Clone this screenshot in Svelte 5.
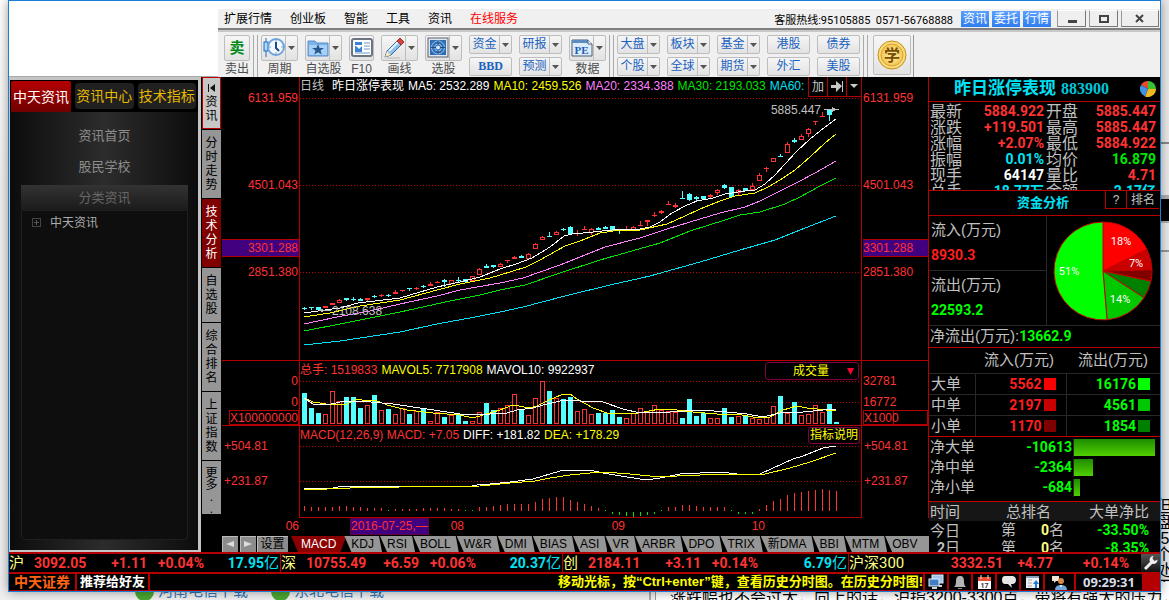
<script>
  const menus = ['扩展行情', '创业板', '智能', '工具', '资讯'];
  const quick = ['资讯', '委托', '行情'];
  const pairsA = [
    [['资金', true], ['BBD', false]],
    [['研报', true], ['预测', true]]
  ];
  const pairsB = [
    [['大盘', true], ['个股', true]],
    [['板块', true], ['全球', true]],
    [['基金', true], ['期货', true]],
    [['港股', false], ['外汇', false]],
    [['债券', false], ['美股', false]]
  ];
  const tools = [
    { id: 'period', label: '周期', drop: true },
    { id: 'folder', label: '自选股', drop: true },
    { id: 'f10', label: 'F10', drop: false },
    { id: 'pencil', label: '画线', drop: true },
    { id: 'radar', label: '选股', drop: true }
  ];
  const vtabs = ['分时走势', '技术分析', '自选股', '综合排名', '上证指数', '更多\n.\n.'];
  const indicators = ['MACD', 'KDJ', 'RSI', 'BOLL', 'W&R', 'DMI', 'BIAS', 'ASI', 'VR', 'ARBR', 'DPO', 'TRIX', '新DMA', 'BBI', 'MTM', 'OBV'];

  // kind, body top, body bottom, wick top, wick bottom
  const candles = `c308,309,307,310 c307,308,307,310 c307,310,307,310 r306,308,306,308 r303,305,303,305 r300,303,299,303 c298,300,298,301 c299,300,297,301
c299,301,298,301 r298,300,298,301 c296,297,295,298 r295,296,294,297 c295,296,294,297 r292,294,290,294 r290,291,290,292 c288,289,288,291 r288,289,287,290
c286,287,285,288 r284,286,282,286 r282,283,281,283 c280,282,279,287 r280,284,280,284 c280,281,277,282 c279,282,279,282 r276,281,276,282 r269,275,268,275
c266,268,264,268 c265,267,265,268 r264,267,263,267 r260,261,260,263 r257,259,256,259 c256,258,255,258 r254,259,253,259 r244,249,243,249 r237,240,236,240
c236,237,232,237 r232,235,231,235 c229,230,228,231 c227,234,226,234 r233,234,230,236 r229,230,226,230 r229,233,228,235 c228,230,227,230 c227,229,226,229
c226,230,226,231 c230,231,230,234 r229,230,226,230 r227,230,226,231 r225,226,221,226 r220,222,220,226 r215,216,212,217 r211,213,210,214 r204,205,201,205
r205,207,203,208 c198,199,191,199 c194,200,193,201 c197,199,196,201 c196,199,196,200 r195,197,194,198 r190,193,189,195 c185,188,184,189 c187,197,187,197
r190,193,189,195 c188,191,188,191 r186,190,183,190 r175,181,173,181 r168,169,167,172 r158,162,158,162 c156,157,154,157 r144,153,142,153 c140,142,138,143
r136,140,134,140 r129,134,128,137 r121,122,121,125 r116,117,112,117 c110,115,109,121 c109,110,109,110`
    .split(/\s+/)
    .map((s, i) => {
      const [t, b, h, l] = s.slice(1).split(',').map(Number);
      return { up: s[0] === 'r', t, b, h, l, x: 304 + i * 7 };
    });

  const averages = [
    ['#fff', '304,313 325,310 340,308 358,303 400,298 437,287 460,282 480,277 500,269 516,264 532,258 550,247 564,236 572,234 583,233 612,230 640,229 650,227 660,222 672,213 685,206 697,201 713,198 725,194 745,191 755,190 765,184 775,175 785,164 797,151 810,139 820,131 836,119'],
    ['#ff0', '304,317 330,313 360,306 400,300 437,290 460,284 490,278 500,275 526,267 540,260 565,246 580,241 600,233 620,230 640,230 667,224 685,216 700,209 720,201 735,196 755,193 768,187 780,180 795,170 810,157 825,143 836,134'],
    ['#ff80ff', '304,324 337,317 370,311 400,304 437,296 460,290 500,283 523,278 560,265 605,247 640,238 667,229 700,219 720,213 745,207 760,201 780,191 800,181 815,173 836,161'],
    ['#00e600', '304,331 340,324 360,320 400,312 450,301 480,295 500,290 525,285 560,273 600,260 660,243 690,231 725,220 740,215 760,212 785,204 800,197 820,186 836,178'],
    ['#02e2f4', '304,345 340,341 400,332 437,324 470,318 500,312 523,307 565,296 610,285 650,276 700,262 740,250 775,240 800,230 836,216']
  ];

  const volumes = 'c31 c16 c11 r10 r33 r23 c27 c27 c16 r19 c29 r14 c15 r10 r16 c10 r13 c16 r3 r12 c7 r9 c10 c3 r3 r12 c21 c14 r16 r19 r30 c14 r9 r26 r43 c33 r26 c25 c27 r13 r15 r10 c11 c11 c14 c7 r6 r11 r16 r13 r19 r14 r13 r12 c6 c25 c8 c11 r6 r6 c16 c7 r8 c9 r6 r5 r7 r18 c28 r11 c22 r9 r10 r19 r12 c20 c2'
    .split(' ')
    .map((s, i) => ({ up: s[0] === 'r', h: Number(s.slice(1)), x: 302 + i * 7 }));

  const hist = [5, 4, 4, 4, 4, 5, 5, 4, 4, 3, 3, 3, 0, 2, 2, 2, 2, 3, 3, 3, 3, 2, 2, 0, 0, 4, 4, 5, 6, 7, 7, 7, 7, 9, 12, 13, 14, 14, 11, 9, 7, 5, 3, 0, -1, -2, -3, -4, -3, -2, -1, 0, 4, 4, 6, 6, 5, 4, 4, 4, 4, 0, -1, -1, -1, 2, 6, 10, 12, 16, 18, 19, 20, 21, 22, 21, 20];

  const quotes = [
    ['最新', '5884.922', 'up', '开盘', '5885.447', 'up'],
    ['涨跌', '+119.501', 'up', '最高', '5885.447', 'up'],
    ['涨幅', '+2.07%', 'up', '最低', '5884.922', 'up'],
    ['振幅', '0.01%', 'cy', '均价', '16.879', 'gr'],
    ['现手', '64147', 'wh', '量比', '4.71', 'up'],
    ['总手', '18.77万', 'cy', '金额', '2.17亿', 'cy']
  ];
  const orders = [
    ['大单', 5562, '#ff0000', 16176, '#00ff00'],
    ['中单', 2197, '#c80000', 4561, '#00c800'],
    ['小单', 1170, '#800000', 1854, '#008000']
  ];
  const nets = [['净大单', -10613, 100], ['净中单', -2364, 24], ['净小单', -684, 7]];

  const parts = [[5562, '#ff0000'], [2197, '#c80000'], [1170, '#800000'], [1854, '#008000'], [4561, '#00c800'], [16176, '#00ff00']];
  const total = parts.reduce((s, p) => s + p[0], 0);
  let acc = 0;
  const slices = parts.map(([v, fill]) => {
    const a = (acc / total) * Math.PI * 2;
    acc += v;
    const b = (acc / total) * Math.PI * 2;
    const at = (q) => `${(50 + 49 * Math.sin(q)).toFixed(2)} ${(50 - 49 * Math.cos(q)).toFixed(2)}`;
    return { fill, d: `M50 50 L${at(a)} A49 49 0 ${b - a > Math.PI ? 1 : 0} 1 ${at(b)} Z` };
  });

  const tickers = [
    ['沪', '3092.05', '+1.11', '+0.04%', '17.95', '亿'],
    ['深', '10755.49', '+6.59', '+0.06%', '20.37', '亿'],
    ['创', '2184.11', '+3.11', '+0.14%', '6.79', '亿'],
    ['沪深300', '3332.51', '+4.77', '+0.14%', '', '']
  ];
</script>

{#snippet toolIcon(id)}
  <svg width="22" height="22" viewBox="0 0 22 22" aria-hidden="true">
    {#if id === 'period'}
      <path d="M3 1v4M3 14v6" stroke="#2266bb" />
      <rect x="1" y="5" width="4" height="9" fill="#a8dcff" stroke="#2266bb" />
      <circle cx="13" cy="10" r="8" fill="#f4f9ff" stroke="#6fa3dc" stroke-width="2" />
      <path d="M13 3v2M13 15v2M6 10h2M18 10h2" stroke="#7da4cc" />
      <path d="M13 5v6l3 3" fill="none" stroke="#1d4c86" stroke-width="2" />
    {:else if id === 'folder'}
      <path d="M1 4h7l2 2h11v13H1z" fill="#7db2e8" stroke="#5b90cc" />
      <path d="M2 8h18v10H2z" fill="#a6d0f8" />
      <path d="M11 7l1.600 4H17l-3.500 2.600 1.300 4L11 15.200 7.200 17.600l1.300-4L5 11h4.400z" fill="#27588f" />
    {:else if id === 'f10'}
      <rect x="1" y="2" width="20" height="17" rx="2" fill="#fff" stroke="#6c7480" stroke-width="2" />
      <path d="M4 5h7v3H4zM4 9h7v6H4z" fill="#3b82d0" />
      <path d="M5 9l3 3 3-3" fill="#fff" />
      <path d="M13 6h6M13 9h6M13 12h6M4 16h15" stroke="#6f96c4" />
    {:else if id === 'pencil'}
      <path d="M2 20l2-6L15 3l4 4L8 18z" fill="#8cc1f2" stroke="#38648f" />
      <path d="M6 14L16 4" stroke="#e4f3ff" stroke-width="2" />
      <path d="M14 4l3-3 4 4-3 3z" fill="#d6453d" stroke="#9c2f2a" />
      <path d="M2 20l2-6 4 4z" fill="#f5e3c0" />
      <path d="M4 21h13" stroke="#b9b9b9" />
    {:else if id === 'radar'}
      <rect x="1" y="1" width="20" height="19" fill="#dfe6ee" stroke="#59626e" />
      <rect x="3" y="3" width="16" height="15" fill="#2f6cb0" />
      <g fill="none" stroke="#9cc4ee"><circle cx="11" cy="10.500" r="6.500" /><circle cx="11" cy="10.500" r="3.500" /><path d="M11 4v13M4 10.500h14" stroke="#1c4d86" /></g>
      <circle cx="11" cy="10.500" r="2" fill="#d4e9ff" />
    {:else}
      <path d="M1 3h16l4 4v12H1z" fill="#dcecfc" stroke="#4b5f75" />
      <path d="M1 3h16v3H1z" fill="#5d8cc0" />
      <path d="M17 3v4h4" fill="#fff" stroke="#4b5f75" />
      <text x="10.500" y="17" text-anchor="middle" font-family="Liberation Serif, serif" font-size="11" font-weight="700" fill="#1f5db0">PE</text>
    {/if}
  </svg>
{/snippet}

{#snippet caret()}
  <svg class="caret" width="7" height="4" viewBox="0 0 7 4" aria-hidden="true"><path d="M0 0h7L3.500 4z" fill="#555" /></svg>
{/snippet}

{#snippet tool(id, label, drop)}
  <div class="tool">
    <button class="split" aria-label={label}>
      <span class="pic">{@render toolIcon(id)}</span>
      {#if drop}<span class="drop">{@render caret()}</span>{/if}
    </button>
    <span class="cap">{label}</span>
  </div>
{/snippet}

{#snippet pair(col)}
  <div class="pair">
    {#each col as [name, drop]}
      <button class="small" class:latin={name === 'BBD'}>
        <span class="name">{name}</span>
        {#if drop}<span class="drop">{@render caret()}</span>{/if}
      </button>
    {/each}
  </div>
{/snippet}

<div class="desktop">
  <div class="behind right-page" aria-hidden="true">
    <i class="band b1"></i><i class="band b2"></i><i class="band b3"></i>
    <p>但<br />盘<br />.5<br />个<br />处<br />于</p>
  </div>
  <div class="behind bottom-page" aria-hidden="true">
    <div class="links">
      <span class="dot"></span><span class="lnk">河南电信下载</span>
      <span class="dot"></span><span class="lnk">东北电信下载</span>
    </div>
    <div class="article">涨跌幅也不会过大，向上的话，沪指3200-3300点，带将有强大的压力，向下的话</div>
  </div>

  <main class="window">
    <header class="top">
      <div class="blank"></div>
      <div class="bars">
        <div class="menubar">
          <nav>
            {#each menus as m}<button class="menu">{m}</button>{/each}
            <button class="menu hot">在线服务</button>
          </nav>
          <span class="phone">客服热线:95105885&nbsp; 0571-56768888</span>
          <div class="quick">{#each quick as q}<button>{q}</button>{/each}</div>
          <div class="winbtns">
            <button aria-label="最小化"><svg width="10" height="10"><path d="M1 6h9v3H1z" fill="#444" /></svg></button>
            <button aria-label="最大化"><svg width="10" height="10"><path d="M1 2h8v6H1z" fill="none" stroke="#444" stroke-width="2" /></svg></button>
            <button class="wide" aria-label="关闭"><svg width="10" height="10"><path d="M1 1l7 7M8 1L1 8" stroke="#444" stroke-width="2" /></svg></button>
          </div>
        </div>
        <div class="toolbar">
          <div class="tool">
            <button class="split sell"><span>卖</span></button>
            <span class="cap">卖出</span>
          </div>
          <i class="grip"></i>
          <div class="group">
            {#each tools as t}{@render tool(t.id, t.label, t.drop)}{/each}
            {#each pairsA as col}{@render pair(col)}{/each}
            {@render tool('pe', '数据', true)}
          </div>
          <i class="grip"></i>
          <div class="group">{#each pairsB as col}{@render pair(col)}{/each}</div>
          <i class="grip"></i>
          <button class="learn" aria-label="学">
            <svg width="30" height="30" viewBox="0 0 30 30">
              <defs><radialGradient id="coin"><stop offset="0" stop-color="#fff3b0" /><stop offset="1" stop-color="#f3c650" /></radialGradient></defs>
              <circle cx="15" cy="15" r="14" fill="#f9dc7c" stroke="#c58d1a" />
              <circle cx="15" cy="15" r="11" fill="url(#coin)" stroke="#d8a432" />
              <text x="15" y="21" text-anchor="middle" font-family="Noto Sans CJK SC, sans-serif" font-size="16" font-weight="700" fill="#7a4d05">学</text>
            </svg>
          </button>
          <i class="edge"></i>
        </div>
      </div>
    </header>

    <div class="body">
      <aside class="info">
        <div class="itabs">
          <button class="on">中天资讯</button><button>资讯中心</button><button>技术指标</button>
        </div>
        <div class="ibody">
          <a href="#home">资讯首页</a>
          <a href="#school">股民学校</a>
          <a href="#sort" class="sel">分类资讯</a>
          <div class="tree"><span class="plus"></span><span>中天资讯</span></div>
        </div>
      </aside>

      <nav class="vtabs">
        <button class="first">
          <svg width="9" height="9" viewBox="0 0 9 9" aria-hidden="true"><path d="M1 0h1v8H1zM8 0v8L3 4z" fill="#111" /></svg>
          <span>资讯</span>
        </button>
        {#each vtabs as v, i}<button class:on={i === 1} class:more={i === 5}><span>{v}</span></button>{/each}
      </nav>

      <section class="chart">
        <div class="axis left price">
          <span>6131.959</span><span>4501.043</span><span class="cursor">3301.288</span><span>2851.380</span>
        </div>
        <div class="plot">
          <svg viewBox="300 77 561 283" preserveAspectRatio="none" shape-rendering="crispEdges" aria-hidden="true">
            {#each [98, 185, 272] as y}<line x1="300" x2="861" y1={y + 0.5} y2={y + 0.5} stroke="#c00000" stroke-dasharray="1 2" />{/each}
            {#each candles as c}
              <rect x={c.x} y={c.h} width="1" height={c.l - c.h} fill={c.up ? '#ff3232' : '#54ffff'} />
              {#if c.up && c.b - c.t > 2}
                <rect x={c.x - 1.5} y={c.t + 0.5} width="4" height={c.b - c.t - 1} fill="#000" stroke="#ff3232" />
              {:else}
                <rect x={c.x - 2} y={c.t} width="5" height={c.b - c.t} fill={c.up ? '#ff3232' : '#54ffff'} />
              {/if}
            {/each}
            {#each averages as [color, pts]}<polyline points={pts} fill="none" stroke={color} />{/each}
            <path d="M319 310.500h12M824 109.500h14" stroke="#c0c0c0" />
            <path d="M319 310.500l4-2v4zM836 109.500l-4-3v6z" fill="#c0c0c0" />
          </svg>
          <div class="legend main">
            <span class="gy">日线</span><span class="wh wide">昨日涨停表现</span><span class="wh">MA5: 2532.289</span><span class="ye">MA10: 2459.526</span><span class="mg">MA20: 2334.388</span><span class="dg">MA30: 2193.033</span><span class="cy cut">MA60: 1969.217</span>
          </div>
          <div class="ctl">
            <button>加</button>
            <button aria-label="末端"><svg width="13" height="11"><path d="M0 4h5V0l6 5-6 6V7H0zM11 0h1v11h-1z" fill="#c8c8c8" /></svg></button>
            <button aria-label="展开"><svg width="8" height="5"><path d="M0 0h8L4 4z" fill="#c8c8c8" /></svg></button>
          </div>
          <span class="note low">2108.638</span>
          <span class="note high">5885.447</span>
        </div>
        <div class="axis right price">
          <span>6131.959</span><span>4501.043</span><span class="cursor">3301.288</span><span>2851.380</span>
        </div>

        <div class="axis left vol"><span>0</span><span>0</span><span class="unit">X100000000</span></div>
        <div class="plot">
          <svg viewBox="300 361 561 64" preserveAspectRatio="none" shape-rendering="crispEdges" aria-hidden="true">
            {#each [381, 402] as y}<line x1="300" x2="861" y1={y + 0.5} y2={y + 0.5} stroke="#c00000" stroke-dasharray="1 2" />{/each}
            {#each volumes as v}
              {#if v.up}
                <rect x={v.x + 0.5} y={424.5 - v.h} width="4" height={v.h - 1} fill="#000" stroke="#ff3232" />
              {:else}
                <rect x={v.x} y={424 - v.h} width="5" height={v.h} fill="#54ffff" />
              {/if}
            {/each}
            <polyline fill="none" stroke="#ff0" points="304,398 313,402 333,405 347,404 357,399 367,401 375,400 387,405 407,410 433,413 460,415 473,418 483,415 500,410 513,405 530,408 537,406 547,401 563,394 570,394 577,399 593,408 607,413 633,414 660,409 677,410 693,412 717,414 737,414 753,417 770,417 783,410 797,406 807,408 836,411" />
            <polyline fill="none" stroke="#fff" points="304,398 313,404 327,405 340,402 360,401 393,404 427,409 447,412 467,415 490,414 507,413 517,410 533,408 543,405 560,401 570,400 580,401 603,402 623,409 640,413 670,412 700,410 727,412 747,414 763,417 780,413 803,412 823,410 836,409" />
          </svg>
          <div class="legend"><span class="up">总手: 1519833</span><span class="ye">MAVOL5: 7717908</span><span class="wh">MAVOL10: 9922937</span></div>
          <div class="pick">
            <select aria-label="副图指标"><option>成交量</option></select>
            <svg width="7" height="7" aria-hidden="true"><path d="M0 0h7L3.500 7z" fill="#ff0032" /></svg>
          </div>
        </div>
        <div class="axis right vol"><span>32781</span><span>16772</span><span class="unit">X1000</span></div>

        <div class="axis left macd"><span>+504.81</span><span>+231.87</span></div>
        <div class="plot">
          <svg viewBox="300 426 561 91" preserveAspectRatio="none" shape-rendering="crispEdges" aria-hidden="true">
            {#each [446, 481] as y}<line x1="300" x2="861" y1={y + 0.5} y2={y + 0.5} stroke="#c00000" stroke-dasharray="1 2" />{/each}
            {#each hist as h, i}
              {#if h > 0}
                <rect x={304 + i * 7} y={511 - h} width="1" height={h} fill="#ff3232" />
              {:else}
                <rect x={304 + i * 7} y={h < 0 ? 512 : 510} width="1" height={1 - h} fill="#00e600" />
              {/if}
            {/each}
            <polyline fill="none" stroke="#fff" points="304,488 333,488 343,486 433,486 467,487 477,485 490,484 510,482 533,479 550,474 560,471 590,470 603,473 627,477 647,480 660,478 680,474 700,473 720,472 737,474 760,474 773,468 793,459 803,456 823,448 836,446" />
            <polyline fill="none" stroke="#ff0" points="304,490 350,488 400,487 480,486 510,483 535,481 550,478 570,475 590,473 603,472 630,474 650,476 677,476 700,475 730,474 765,474 790,468 810,462 836,453" />
          </svg>
          <div class="legend"><span class="up">MACD(12,26,9) MACD: +7.05</span><span class="wh">DIFF: +181.82</span><span class="ye">DEA: +178.29</span></div>
          <button class="explain">指标说明</button>
        </div>
        <div class="axis right macd"><span>+504.81</span><span>+231.87</span></div>

        <div class="dates">
          <span>06</span><span>08</span><span>09</span><span>10</span>
          <b>2016-07-25,—</b>
        </div>
        <div class="inds">
          <button class="sq" aria-label="向左"><svg width="8" height="6"><path d="M8 0v6L0 3z" fill="#ddd" /></svg></button>
          <button class="sq" aria-label="向右"><svg width="8" height="6"><path d="M0 0v6l8-3z" fill="#ddd" /></svg></button>
          <button class="set">设置</button>
          {#each indicators as n, i}<button class="ind" class:on={i === 0}>{n}</button>{/each}
        </div>
      </section>

      <aside class="quote">
        <h1><span>昨日涨停表现</span> <em>883900</em>
          <svg width="16" height="16" viewBox="0 0 16 16" aria-hidden="true">
            <path d="M8 8V0A8 8 0 0 0 1 4z" fill="#e84a2a" /><path d="M8 8V0a8 8 0 0 1 8 8z" fill="#36c236" /><path d="M8 8h8a8 8 0 0 1-11 7.400z" fill="#f2b91d" /><path d="M8 8L1 4a8 8 0 0 0 4 11.400z" fill="#3f93e6" />
          </svg>
        </h1>
        <dl class="quotes">
          {#each quotes as q}
            <dt>{q[0]}</dt><dd class={q[2]}>{q[1]}</dd><dt>{q[3]}</dt><dd class={q[5]}>{q[4]}</dd>
          {/each}
        </dl>
        <div class="flowhead"><h2>资金分析</h2><button>?</button><button class="rank">排名</button></div>
        <div class="flow">
          <div class="io"><span>流入(万元)</span><b class="rd">8930.3</b></div>
          <div class="io"><span>流出(万元)</span><b class="gn">22593.2</b></div>
          <div class="pie">
            <svg width="100" height="100" viewBox="0 0 100 100">
              {#each slices as s}<path d={s.d} fill={s.fill} stroke="#c80000" />{/each}
              <g fill="#fff" font-family="Roboto, sans-serif" font-size="11" text-anchor="middle"><text x="68" y="24">18%</text><text x="83" y="46">7%</text><text x="16" y="54">51%</text><text x="67" y="82">14%</text></g>
            </svg>
          </div>
        </div>
        <div class="netout">净流出(万元):<b class="gn">13662.9</b></div>
        <table class="orders">
          <colgroup><col class="c1" /><col class="c2" /><col /></colgroup>
          <thead><tr><td></td><th>流入(万元)</th><th>流出(万元)</th></tr></thead>
          <tbody>
            {#each orders as o}
              <tr><th>{o[0]}</th><td class="rd"><span>{o[1]}<i style:background={o[2]}></i></span></td><td class="gn"><span>{o[3]}<i style:background={o[4]}></i></span></td></tr>
            {/each}
          </tbody>
        </table>
        <div class="nets">
          {#each nets as n}
            <div class="net"><span>{n[0]}</span><b class="gn">{n[1]}</b><div><i style:width="{n[2]}%"></i></div></div>
          {/each}
        </div>
        <table class="ranks">
          <thead><tr><th>时间</th><th>总排名</th><th>大单净比</th></tr></thead>
          <tbody>
            <tr><td>今日</td><td>第<b>0</b>名</td><td class="gn">-33.50%</td></tr>
            <tr><td class="in"><strong>2</strong>日</td><td>第<b>0</b>名</td><td class="gn">-8.35%</td></tr>
          </tbody>
        </table>
      </aside>
    </div>

    <div class="ticker">
      {#each tickers as t}
        <div class="tick" class:last={!t[4]}><span class="nm">{t[0]}</span><b>{t[1]}</b><b>{t[2]}</b><b>{t[3]}</b>{#if t[4]}<b class="amt">{t[4]}<span>{t[5]}</span></b>{/if}</div>
      {/each}
      <button class="wrench" aria-label="设置">
        <svg width="16" height="16" viewBox="0 0 16 16"><path d="M2 14L9 7" stroke="#eee" stroke-width="3" /><path d="M14.500 4.500A4 4 0 1 1 10.500 1L9.500 3.500l2 2.500z" fill="#eee" /></svg>
      </button>
    </div>

    <footer class="status">
      <span class="brand">中天证券</span>
      <button class="invite">推荐给好友</button>
      <span class="msg">移动光标，按“Ctrl+enter”键，查看历史分时图。在历史分时图!</span>
      <button aria-label="窗口"><svg width="16" height="16" viewBox="0 0 16 16"><rect x="4" y="1" width="11" height="8" fill="#9fc4ea" stroke="#dfeaf5" /><rect x="1" y="5" width="10" height="7" fill="#3f7fc4" stroke="#e8f0f8" /><path d="M4 14h5M11 12h3" stroke="#cdd6df" stroke-width="2" /></svg></button>
      <button aria-label="提醒"><svg width="14" height="15" viewBox="0 0 14 15"><path d="M7 1c3 0 4 2 4 5 0 4 1 5 2 6H1c1-1 2-2 2-6 0-3 1-5 4-5z" fill="#b4b4b4" /><path d="M5 13h4v1H5z" fill="#999" /></svg></button>
      <button aria-label="日历"><svg width="15" height="15" viewBox="0 0 15 15"><path d="M1 2h13v12H1z" fill="#fff" /><path d="M1 2h13v4H1z" fill="#e4502f" /><path d="M4 0v4M11 0v4" stroke="#eee" /><text x="7.500" y="13" text-anchor="middle" font-family="Roboto, sans-serif" font-size="7" font-weight="700" fill="#333">17</text></svg></button>
      <button aria-label="消息"><svg width="15" height="14" viewBox="0 0 15 14"><path d="M4 1h8q3 1 3 4t-3 4h-2l1 4-4-4H4Q1 9 1 5t3-4z" fill="#e6e6e6" /></svg></button>
      <button aria-label="上传"><svg width="15" height="14" viewBox="0 0 15 14"><path d="M1 1h13v12H1z" fill="#f0f0f0" /><path d="M1 1h13v2H1z" fill="#8aa0b8" /><path d="M3 5h4M3 8h4M3 11h4" stroke="#aaa" /><path d="M11 5l3 4h-2v4h-2V9H8z" fill="#1e78d0" /></svg></button>
      <button class="chat" aria-label="客服"><svg width="17" height="15" viewBox="0 0 17 15"><path d="M1 1h7v5H5L3 8V6H1z" fill="#f2e4d0" /><circle cx="10" cy="6" r="3" fill="#d38a4a" /><path d="M4 15q0-5 6-5t6 5z" fill="#6ea8dc" /><path d="M9 10l1 3 1-3z" fill="#fff" /></svg></button>
      <time>09:29:31</time>
      <i class="end"></i>
    </footer>
  </main>
</div>

<style>
  :global(body) { margin: 0; overflow: hidden; }
  .desktop {
    position: relative; isolation: isolate; height: 100vh; min-height: 600px; box-sizing: border-box; padding: 0 8px 8px 8px;
    display: flex; overflow: hidden; background: linear-gradient(#fff, #f0f0f0 30%);
    font: 12px/16px "Liberation Sans", "Noto Sans CJK SC", sans-serif;
  }
  button, select { font: inherit; color: inherit; margin: 0; padding: 0; border: 0; background: none; border-radius: 0; cursor: pointer; }
  a { color: inherit; text-decoration: none; }
  svg { display: block; flex: none; }
  .window { flex: 1; min-width: 0; display: flex; flex-direction: column; border: 1px solid #1a7fd4; background: #000; box-shadow: 0 0 10px rgba(0, 0, 0, 0.4); }

  .behind { position: absolute; z-index: -1; color: #000; font-size: 16px; }
  .right-page { top: 0; right: 0; bottom: 0; width: 8px; background: #eaeaea; }
  .right-page p { position: absolute; top: 499px; left: -5px; margin: 0; line-height: 16px; }
  .band { position: absolute; left: 0; right: 0; }
  .b1 { top: 142px; height: 2px; background: #888; }
  .b2 { top: 195px; height: 28px; background: #000; border: solid #b0b0b0; border-width: 4px 0 2px; box-sizing: border-box; }
  .b3 { top: 250px; height: 2px; background: #999; }
  .bottom-page { left: 0; right: 0; bottom: 0; height: 18px; display: flex; overflow: hidden; line-height: 20px; }
  .links { flex: 0 0 514px; padding-left: 135px; display: flex; gap: 4px; border-right: 2px solid #aaa; }
  .lnk { color: #3677b5; line-height: 18px; width: 109px; font-size: 15px; }
  .dot { width: 19px; height: 19px; border-radius: 50%; background: #4aa832; }
  .article { flex: 1; padding: 6px 0 0 14px; background: #fff; font-size: 16px; white-space: nowrap; border-left: 1px solid #999; margin-left: 4px; }

  .top { display: flex; height: 76px; flex: none; background: #f0f0f0; }
  .blank { width: 209px; background: #fff; flex: none; box-sizing: border-box; border-bottom: 1px solid #aaa; }
  .bars { flex: 1; min-width: 0; }
  .menubar { display: flex; height: 29px; box-sizing: border-box; align-items: center; padding: 0 1px 0 6px; border-top: 8px solid #fff; border-bottom: 2px solid #808080; background: #f0f0f0; color: #000; }
  .menubar nav { display: flex; gap: 18px; flex: 1; }
  .menu { white-space: nowrap; line-height: 14px; }
  .hot { color: #f00; }
  .phone { font: 11px/14px Roboto, "Noto Sans CJK SC", sans-serif; margin-right: 8px; padding-top: 4px; white-space: nowrap; }
  .quick { display: flex; gap: 3px; margin-right: 6px; }
  .quick button { width: 28px; height: 16px; line-height: 16px; background: linear-gradient(#5ba0ff, #2f7df0); color: #fff; }
  .winbtns { display: flex; gap: 3px; }
  .winbtns button { width: 29px; height: 17px; display: grid; place-items: center; box-sizing: border-box; border: 1px solid #999; border-color: #fff #777 #777 #999; background: #efefef; }
  .winbtns .wide { width: 38px; }
  .toolbar { display: flex; height: 47px; box-sizing: border-box; padding: 3px 0 0 6px; border-top: 2px solid #c8c8c8; overflow: hidden; background: #f0f0f0; }
  .group { display: flex; gap: 7px; }
  .tool { display: flex; flex-direction: column; align-items: center; gap: 0; }
  .split, .small, .learn { border: 1px solid #bdbdbd; background: linear-gradient(#f6f6f6, #e2e2e2); border-radius: 2px; box-sizing: border-box; display: flex; align-items: stretch; }
  .split { height: 26px; }
  .sell { width: 26px; justify-content: center; align-items: center; color: #008a18; font-size: 15px; font-weight: 700; }
  .pic { width: 23px; display: grid; place-items: center; }
  .drop { width: 11px; border-left: 1px solid #bdbdbd; display: grid; place-items: center; }
  .cap { color: #4c4c4c; line-height: 16px; white-space: nowrap; }
  .pair { display: flex; flex-direction: column; gap: 3px; }
  .small { width: 43px; height: 19px; color: #1a62c0; }
  .name { flex: 1; text-align: center; line-height: 17px; white-space: nowrap; }
  .latin { font-family: "Liberation Serif", serif; font-weight: 700; }
  .grip { width: 3px; margin: 0 3px; border-left: 1px solid #aaa; border-right: 1px solid #aaa; flex: none; }
  .learn { width: 38px; height: 40px; margin: 0 2px; justify-content: center; align-items: center; }
  .edge { border-left: 1px solid #999; }

  .body { flex: 1; min-height: 0; display: flex; overflow: hidden; }

  .info { width: 192px; flex: none; box-sizing: border-box; border: solid #c4c4c4; border-width: 3px 3px 2px 1px; display: flex; flex-direction: column; }
  .itabs { display: flex; gap: 4px; height: 32px; padding: 0 2px 0 1px; }
  .itabs button { flex: 1; height: 26px; margin-top: 3px; border-radius: 4px; background: #202020; color: #e6b800; font-size: 14px; white-space: nowrap; }
  .itabs .on { height: 31px; margin-top: 1px; flex: 0 0 60px; border-radius: 2px 2px 0 0; background: linear-gradient(#b40000, #700000); color: #fff; }
  .ibody { flex: 1; display: flex; flex-direction: column; padding: 8px 10px 10px 11px; background: linear-gradient(90deg, #0c0c0c, #2c2c2c 50%, #0c0c0c); color: #8c8c8c; font-size: 13px; text-align: center; }
  .ibody a { line-height: 31px; }
  .ibody .sel { line-height: 25px; margin-top: 3px; background: linear-gradient(#333, #1b1b1b); color: #666; }
  .tree { flex: 1; display: flex; gap: 9px; padding: 4px 0 0 10px; background: #0e0e0e; border: 1px solid #1f1f1f; border-radius: 0 0 4px 4px; color: #aaa; font-size: 12px; text-align: left; }
  .plus { width: 7px; height: 7px; margin-top: 3px; border: 1px solid #444; background: linear-gradient(#555, #555) 50% 50% / 5px 1px no-repeat, linear-gradient(#555, #555) 50% 50% / 1px 5px no-repeat; }

  .vtabs { width: 21px; flex: none; display: flex; flex-direction: column; gap: 1px; padding: 0 1px; box-sizing: border-box; overflow: hidden; }
  .vtabs button { flex: none; display: flex; flex-direction: column; align-items: center; padding: 6px 0; background: #969696; color: #000; }
  .vtabs span { width: 13px; font-size: 12px; line-height: 14px; word-break: break-all; white-space: pre-line; }
  .vtabs .first { background: #c6c6c6; border: 1px solid #b00; padding: 6px 0 5px; gap: 2px; }
  .vtabs .on { background: #800000; color: #fff; }
  .vtabs .more { padding: 6px 0 0; height: 53px; }
  .vtabs .more span { line-height: 12px; text-align: center; }

  .chart { flex: 1; min-width: 0; display: grid; grid-template-columns: 77px 1fr 67px; grid-template-rows: 1fr 65px 92px 18px 16px; }
  .plot { display: grid; position: relative; border: solid #b40000; border-width: 0 1px 1px 1px; overflow: hidden; min-width: 0; min-height: 0; }
  .plot > svg { grid-area: 1 / 1; width: 100%; height: 100%; }
  .axis { color: #ff3232; display: flex; flex-direction: column; border-bottom: 1px solid #b40000; line-height: 18px; box-sizing: border-box; }
  .axis.left { text-align: right; }
  .axis.left span { padding-right: 1px; }
  .axis.right { border-right: 1px solid #b40000; padding-left: 1px; }
  .axis.macd { border-bottom: 0; text-align: left; padding-left: 2px; padding-top: 11px; gap: 17px; }
  .price { padding-top: 12px; }
  .price span:nth-child(2) { margin-top: 69px; }
  .axis .cursor { margin-top: 46px; background: #400080; box-shadow: 0 -1px #b40000, 0 1px #b40000; line-height: 16px; margin-bottom: 7px; }
  .vol { padding-top: 10px; }
  .vol span { line-height: 21px; }
  .axis.vol .unit { line-height: 14px; height: 13px; padding: 0; border: 1px solid #b40000; align-self: flex-end; margin-top: -3px; white-space: nowrap; }
  .axis.right .unit { align-self: stretch; background: linear-gradient(#b40000, #b40000) 29px 0 / 1px 100% no-repeat; }
  .legend { grid-area: 1 / 1; align-self: start; display: flex; gap: 4px; line-height: 19px; white-space: nowrap; overflow: hidden; min-width: 0; }
  .legend.main { margin-right: 52px; }
  .legend span { flex: none; }
  .legend .cut { flex: 1; min-width: 0; overflow: hidden; }
  .legend .wide { margin-left: 4px; }
  .gy { color: #c0c0c0; } .wh { color: #fff; } .ye { color: #ff0; } .mg { color: #ff80ff; } .dg, .gr { color: #00e600; } .cy { color: #02e2f4; } .up { color: #ff3232; } .rd { color: #ff1e1e; } .gn { color: #00ff00; }
  .ctl { position: absolute; top: 0; right: 0; height: 19px; display: grid; grid-template-columns: 18px 18px 14px; gap: 1px; padding: 0 0 1px 1px; background: #b40000; color: #c8c8c8; }
  .ctl button { background: #000; display: grid; place-items: center; }
  .note { position: absolute; color: #c0c0c0; line-height: 14px; }
  .low { left: 32px; bottom: 42px; }
  .high { right: 40px; top: 26px; }
  .pick, .explain { position: absolute; box-sizing: border-box; border: 1px solid #800040; border-radius: 3px; background: #000; color: #ff0; }
  .pick { top: 1px; right: 2px; width: 94px; height: 18px; display: flex; align-items: center; padding-right: 4px; }
  .pick select { appearance: none; flex: 1; text-align: right; text-align-last: right; padding-right: 18px; color: #ff0; line-height: 14px; height: 14px; }
  .pick option { background: #000; }
  .explain { top: 1px; right: 1px; height: 17px; line-height: 15px; padding: 0 1px; }
  .dates { grid-column: 1 / 4; position: relative; display: grid; grid-template-columns: 77px 165fr 161fr 140fr 97fr 67px; color: #ff3232; line-height: 16px; text-align: right; }
  .dates b { position: absolute; left: 128px; top: 0; height: 17px; line-height: 17px; font-weight: 400; padding: 0 1px; background: #400080; box-shadow: inset 0 0 0 1px #600040; }
  .inds { grid-column: 1 / 4; display: flex; background: #000; overflow: hidden; color: #000; line-height: 16px; }
  .sq, .set { background: #8c8c8c; width: 16px; flex: none; display: grid; place-items: center; margin-right: 2px; box-shadow: inset 1px 1px #bbb; }
  .inds .set { width: 31px; margin: 0 3px 0 -1px; }
  .ind { background: #969696; padding: 0 8px 0 7px; margin-right: -2px; white-space: nowrap; clip-path: polygon(0 0, calc(100% - 3px) 0, 100% 100%, 7px 100%); }
  .ind:last-child { flex: 1; margin: 0; text-align: left; padding-right: 0; clip-path: polygon(0 0, 100% 0, 100% 100%, 7px 100%); }
  .ind.on { background: #8b0000; color: #fff; padding: 0 10px; clip-path: polygon(0 0, 100% 0, calc(100% - 6px) 100%, 7px 100%); }

  .quote { width: 231px; flex: none; box-sizing: border-box; color: #c0c0c0; display: flex; flex-direction: column; font-size: 15px; overflow: hidden; }
  .quote > * { flex: none; }
  .quote b, .quote dd, .orders td, .ranks .gn, .ranks strong { font-family: Roboto, "Noto Sans CJK SC", sans-serif; font-weight: 700; font-size: 14px; }
  h1 { margin: 0; height: 24px; display: flex; align-items: center; gap: 5px; padding: 0 4px 0 25px; color: #02e2f4; font-size: 17px; line-height: 24px; white-space: nowrap; }
  h1 em { flex: 1; font: 700 16px/22px "Liberation Serif", serif; color: #00c8d8; }
  .quotes { margin: 0; display: grid; grid-template-columns: 34px 80px 34px 1fr; grid-auto-rows: 16px; height: 89px; padding: 1px 4px 0 1px; box-sizing: border-box; overflow: hidden; border: solid #b40000; border-width: 1px 0 0 0; font-size: 16px; }
  .quotes dt, .quotes dd { margin: 0; line-height: 17px; white-space: nowrap; }
  .quotes dd { text-align: right; }
  .quotes dt:nth-of-type(even) { padding-left: 2px; }
  .flowhead { display: flex; height: 26px; box-sizing: border-box; border: solid #b40000; border-width: 1px 0; padding-right: 1px; font-size: 13px; }
  .flowhead h2 { margin: 0; flex: 1; text-align: right; padding-right: 36px; font-size: 13px; line-height: 24px; color: #02e2f4; }
  .flowhead button { width: 21px; height: 18px; line-height: 18px; box-sizing: border-box; border: solid #b40000; border-width: 0 0 1px 1px; font-size: 12px; }
  .flowhead .rank { width: 33px; }
  .flow { display: grid; grid-template-columns: 118px 1fr; grid-template-rows: 54px 55px; border-bottom: 1px solid #282828; }
  .io { display: flex; flex-direction: column; line-height: 16px; gap: 9px; padding: 6px 0 0 2px; border-right: 1px solid #282828; }
  .io + .io { border-top: 1px solid #282828; }
  .io b { font-size: 14px; }
  .pie { grid-area: 1 / 2 / 3 / 3; display: grid; place-items: center; padding: 0 2px 0 0; }
  .netout { height: 21px; line-height: 20px; padding-left: 1px; border-bottom: 1px solid #b40000; white-space: nowrap; }
  table { border-collapse: collapse; table-layout: fixed; width: 100%; }
  th, td { padding: 0; font-weight: 400; white-space: nowrap; }
  .c1 { width: 46px; }
  .c2 { width: 91px; }
  .orders thead tr { height: 25px; }
  .orders thead th { text-align: right; padding-right: 12px; }
  .orders tbody tr { height: 21px; border-top: 1px solid #282828; }
  .orders tbody th { text-align: left; padding-left: 2px; line-height: 19px; }
  .orders tbody td { border-left: 1px solid #282828; line-height: 20px; }
  .orders td span { display: flex; justify-content: flex-end; align-items: center; gap: 2px; padding-right: 10px; }
  .orders i { width: 12px; height: 12px; }
  .nets { border: solid #c80000; border-width: 1px 0; height: 64px; padding-left: 1px; }
  .net { display: grid; grid-template-columns: 46px 96px 1fr; height: 20px; line-height: 19px; }
  .net b { text-align: right; line-height: 20px; }
  .net div { margin: 2px 5px 0 1px; border-left: 1px solid #282828; }
  .net i { display: block; height: 17px; background: linear-gradient(#1e8c00, #50d000); }
  .ranks thead { background: #161616; }
  .ranks tr { height: 17px; line-height: 17px; }
  .ranks thead tr { height: 19px; line-height: 19px; }
  .ranks th, .ranks td { text-align: right; padding-right: 11px; }
  .ranks th:first-child, .ranks td:first-child { text-align: left; padding-left: 1px; width: 60px; }
  .ranks th:nth-child(2) { width: 50px; padding-right: 9px; }
  .ranks td:nth-child(2) { padding-right: 8px; }
  .ranks b { color: #ffff80; padding-left: 25px; }
  .ranks td.in { padding-left: 8px; }

  .ticker { display: grid; grid-template-columns: 272fr 282fr 286fr 292fr 19px; flex: none; height: 22px; box-sizing: border-box; border: solid #b40000; border-width: 2px 0; line-height: 18px; color: #ff3232; }
  .ticker b { font: 700 14px/18px Roboto, sans-serif; text-align: right; white-space: nowrap; }
  .tick { display: grid; grid-template-columns: 18px 60px 60px 57px 1fr; border-right: 1px solid #b40000; box-sizing: border-box; padding-right: 1px; min-width: 0; }
  .tick b:nth-of-type(1) { text-align: left; padding-left: 7px; }
  .tick.last { grid-template-columns: 60px 94px 50px 1fr; padding-right: 12px; border: 0; }
  .tick.last b:nth-of-type(1) { text-align: right; padding: 0; }
  .nm { color: #ffff80; font-size: 15px; white-space: nowrap; font-family: Roboto, "Noto Sans CJK SC", sans-serif; }
  .ticker .amt { color: #02e2f4; }
  .amt span { font: 400 15px/16px "Noto Sans CJK SC", sans-serif; }
  .wrench { display: grid; place-items: center; background: linear-gradient(#555, #111); }

  .status { display: flex; flex: none; height: 17px; box-sizing: border-box; background: #b40000; gap: 2px; padding-bottom: 1px; font-size: 13px; line-height: 16px; }
  .status > * { background: #000; }
  .status button { width: 22px; flex: none; display: grid; place-items: center; overflow: hidden; }
  .brand { width: 66px; flex: none; text-align: center; color: #ff6414; font-weight: 700; font-size: 14px; }
  .status .invite { width: 71px; color: #fff; font-weight: 700; }
  .msg { flex: 1; min-width: 0; text-align: right; color: #ff0; font-weight: 700; white-space: nowrap; overflow: hidden; }
  .status .chat { width: 29px; }
  .status time { width: 66px; flex: none; text-align: center; color: #d8dce8; font: 700 13px/16px "Noto Sans", sans-serif; }
  .status .end { width: 16px; background: #b40000; flex: none; }
</style>
